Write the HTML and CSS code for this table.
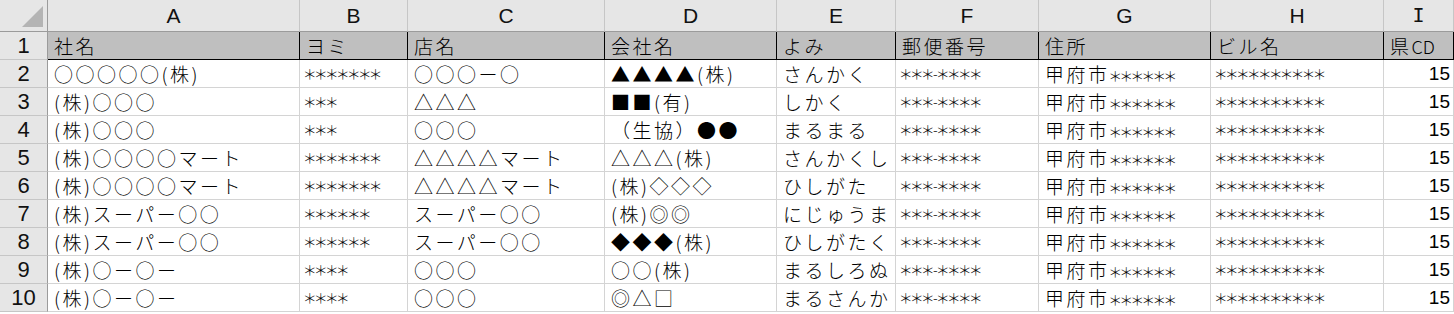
FILE: index.html
```html
<!DOCTYPE html>
<html lang="ja">
<head>
<meta charset="utf-8">
<title>Sheet</title>
<link rel="stylesheet" href="styles.css">
</head>
<body>
<div class="sheet">
  <div class="corner"><svg class="tri" width="22" height="22" viewBox="0 0 22 22"><polygon points="21,0 21,21 0,21" fill="#b4b4b4"/></svg></div>
  <div class="ch">A</div><div class="ch">B</div><div class="ch">C</div><div class="ch">D</div><div class="ch">E</div><div class="ch">F</div><div class="ch">G</div><div class="ch">H</div><div class="ch ch-i">I</div>

  <div class="rh">1</div>
  <div class="c hd">社名</div><div class="c hd">ヨミ</div><div class="c hd">店名</div><div class="c hd">会社名</div><div class="c hd">よみ</div><div class="c hd">郵便番号</div><div class="c hd">住所</div><div class="c hd">ビル名</div><div class="c hd">県<span class="lat">CD</span></div>

  <div class="rh">2</div>
  <div class="c">○○○○○(株)</div><div class="c ast">＊＊＊＊＊＊＊</div><div class="c">○○○ー○</div><div class="c">▲▲▲▲(株)</div><div class="c">さんかく</div><div class="c ast">＊＊＊-＊＊＊＊</div><div class="c">甲府市<span class="ast">＊＊＊＊＊＊</span></div><div class="c ast">＊＊＊＊＊＊＊＊＊＊</div><div class="c num">15</div>

  <div class="rh">3</div>
  <div class="c">(株)○○○</div><div class="c ast">＊＊＊</div><div class="c">△△△</div><div class="c">■■(有)</div><div class="c">しかく</div><div class="c ast">＊＊＊-＊＊＊＊</div><div class="c">甲府市<span class="ast">＊＊＊＊＊＊</span></div><div class="c ast">＊＊＊＊＊＊＊＊＊＊</div><div class="c num">15</div>

  <div class="rh">4</div>
  <div class="c">(株)○○○</div><div class="c ast">＊＊＊</div><div class="c">○○○</div><div class="c">（生協）●●</div><div class="c">まるまる</div><div class="c ast">＊＊＊-＊＊＊＊</div><div class="c">甲府市<span class="ast">＊＊＊＊＊＊</span></div><div class="c ast">＊＊＊＊＊＊＊＊＊＊</div><div class="c num">15</div>

  <div class="rh">5</div>
  <div class="c">(株)○○○○マート</div><div class="c ast">＊＊＊＊＊＊＊</div><div class="c">△△△△マート</div><div class="c">△△△(株)</div><div class="c">さんかくし</div><div class="c ast">＊＊＊-＊＊＊＊</div><div class="c">甲府市<span class="ast">＊＊＊＊＊＊</span></div><div class="c ast">＊＊＊＊＊＊＊＊＊＊</div><div class="c num">15</div>

  <div class="rh">6</div>
  <div class="c">(株)○○○○マート</div><div class="c ast">＊＊＊＊＊＊＊</div><div class="c">△△△△マート</div><div class="c">(株)◇◇◇</div><div class="c">ひしがた</div><div class="c ast">＊＊＊-＊＊＊＊</div><div class="c">甲府市<span class="ast">＊＊＊＊＊＊</span></div><div class="c ast">＊＊＊＊＊＊＊＊＊＊</div><div class="c num">15</div>

  <div class="rh">7</div>
  <div class="c">(株)スーパー○○</div><div class="c ast">＊＊＊＊＊＊</div><div class="c">スーパー○○</div><div class="c">(株)◎◎</div><div class="c">にじゅうま</div><div class="c ast">＊＊＊-＊＊＊＊</div><div class="c">甲府市<span class="ast">＊＊＊＊＊＊</span></div><div class="c ast">＊＊＊＊＊＊＊＊＊＊</div><div class="c num">15</div>

  <div class="rh">8</div>
  <div class="c">(株)スーパー○○</div><div class="c ast">＊＊＊＊＊＊</div><div class="c">スーパー○○</div><div class="c">◆◆◆(株)</div><div class="c">ひしがたく</div><div class="c ast">＊＊＊-＊＊＊＊</div><div class="c">甲府市<span class="ast">＊＊＊＊＊＊</span></div><div class="c ast">＊＊＊＊＊＊＊＊＊＊</div><div class="c num">15</div>

  <div class="rh">9</div>
  <div class="c">(株)○ー○ー</div><div class="c ast">＊＊＊＊</div><div class="c">○○○</div><div class="c">○○(株)</div><div class="c">まるしろぬ</div><div class="c ast">＊＊＊-＊＊＊＊</div><div class="c">甲府市<span class="ast">＊＊＊＊＊＊</span></div><div class="c ast">＊＊＊＊＊＊＊＊＊＊</div><div class="c num">15</div>

  <div class="rh">10</div>
  <div class="c">(株)○ー○ー</div><div class="c ast">＊＊＊＊</div><div class="c">○○○</div><div class="c">◎△□</div><div class="c">まるさんか</div><div class="c ast">＊＊＊-＊＊＊＊</div><div class="c">甲府市<span class="ast">＊＊＊＊＊＊</span></div><div class="c ast">＊＊＊＊＊＊＊＊＊＊</div><div class="c num">15</div>
</div>
</body>
</html>
```

FILE: styles.css
```css
html, body {
  margin: 0;
  padding: 0;
  background: #ffffff;
}

.sheet {
  display: grid;
  grid-template-columns: 48px 252px 108px 197px 172px 119px 143px 172px 173px 70px;
  grid-template-rows: 32px repeat(10, 28px);
  width: 1454px;
  font-family: "Noto Sans CJK JP", "Noto Sans", sans-serif;
  color: #000;
}

.corner {
  box-sizing: border-box;
  background: #e6e6e6;
  border-right: 1px solid #9b9b9b;
  border-bottom: 1px solid #9b9b9b;
  display: flex;
  justify-content: flex-end;
  align-items: flex-end;
  padding: 0 3px 3px 0;
}

.tri {
  display: block;
}

.ch {
  box-sizing: border-box;
  background: #e6e6e6;
  border-right: 1px solid #c6c6c6;
  border-bottom: 1px solid #9b9b9b;
  font-family: "Liberation Sans", Arial, sans-serif;
  font-size: 21px;
  line-height: 31px;
  text-align: center;
  color: #111;
}

.ch-i {
  font-family: "DejaVu Sans Mono", monospace;
  font-size: 20px;
}

.rh {
  box-sizing: border-box;
  background: #e6e6e6;
  border-right: 1px solid #9b9b9b;
  border-bottom: 1px solid #c6c6c6;
  font-family: "Liberation Sans", Arial, sans-serif;
  font-size: 22px;
  line-height: 27px;
  text-align: center;
  color: #111;
}

.c {
  box-sizing: border-box;
  border-right: 1px solid #d4d4d4;
  border-bottom: 1px solid #d4d4d4;
  font-size: 19px;
  font-weight: 300;
  letter-spacing: 2.5px;
  line-height: 27px;
  padding: 0 4px 0 6px;
  white-space: nowrap;
  overflow: hidden;
}

.hd {
  background: #bfbfbf;
  border-right: 1px solid #000;
  border-bottom: 1px solid #000;
}

.lat {
  letter-spacing: 0;
  font-size: 18px;
  font-weight: 300;
}

.ast {
  font-feature-settings: "palt";
  font-size: 14px;
  letter-spacing: -0.5px;
  vertical-align: 1px;
}

.c.ast {
  padding-left: 4px;
}

.num {
  text-align: right;
  font-family: "Liberation Sans", Arial, sans-serif;
  font-size: 19px;
  letter-spacing: 0;
  padding-right: 3px;
}
```
